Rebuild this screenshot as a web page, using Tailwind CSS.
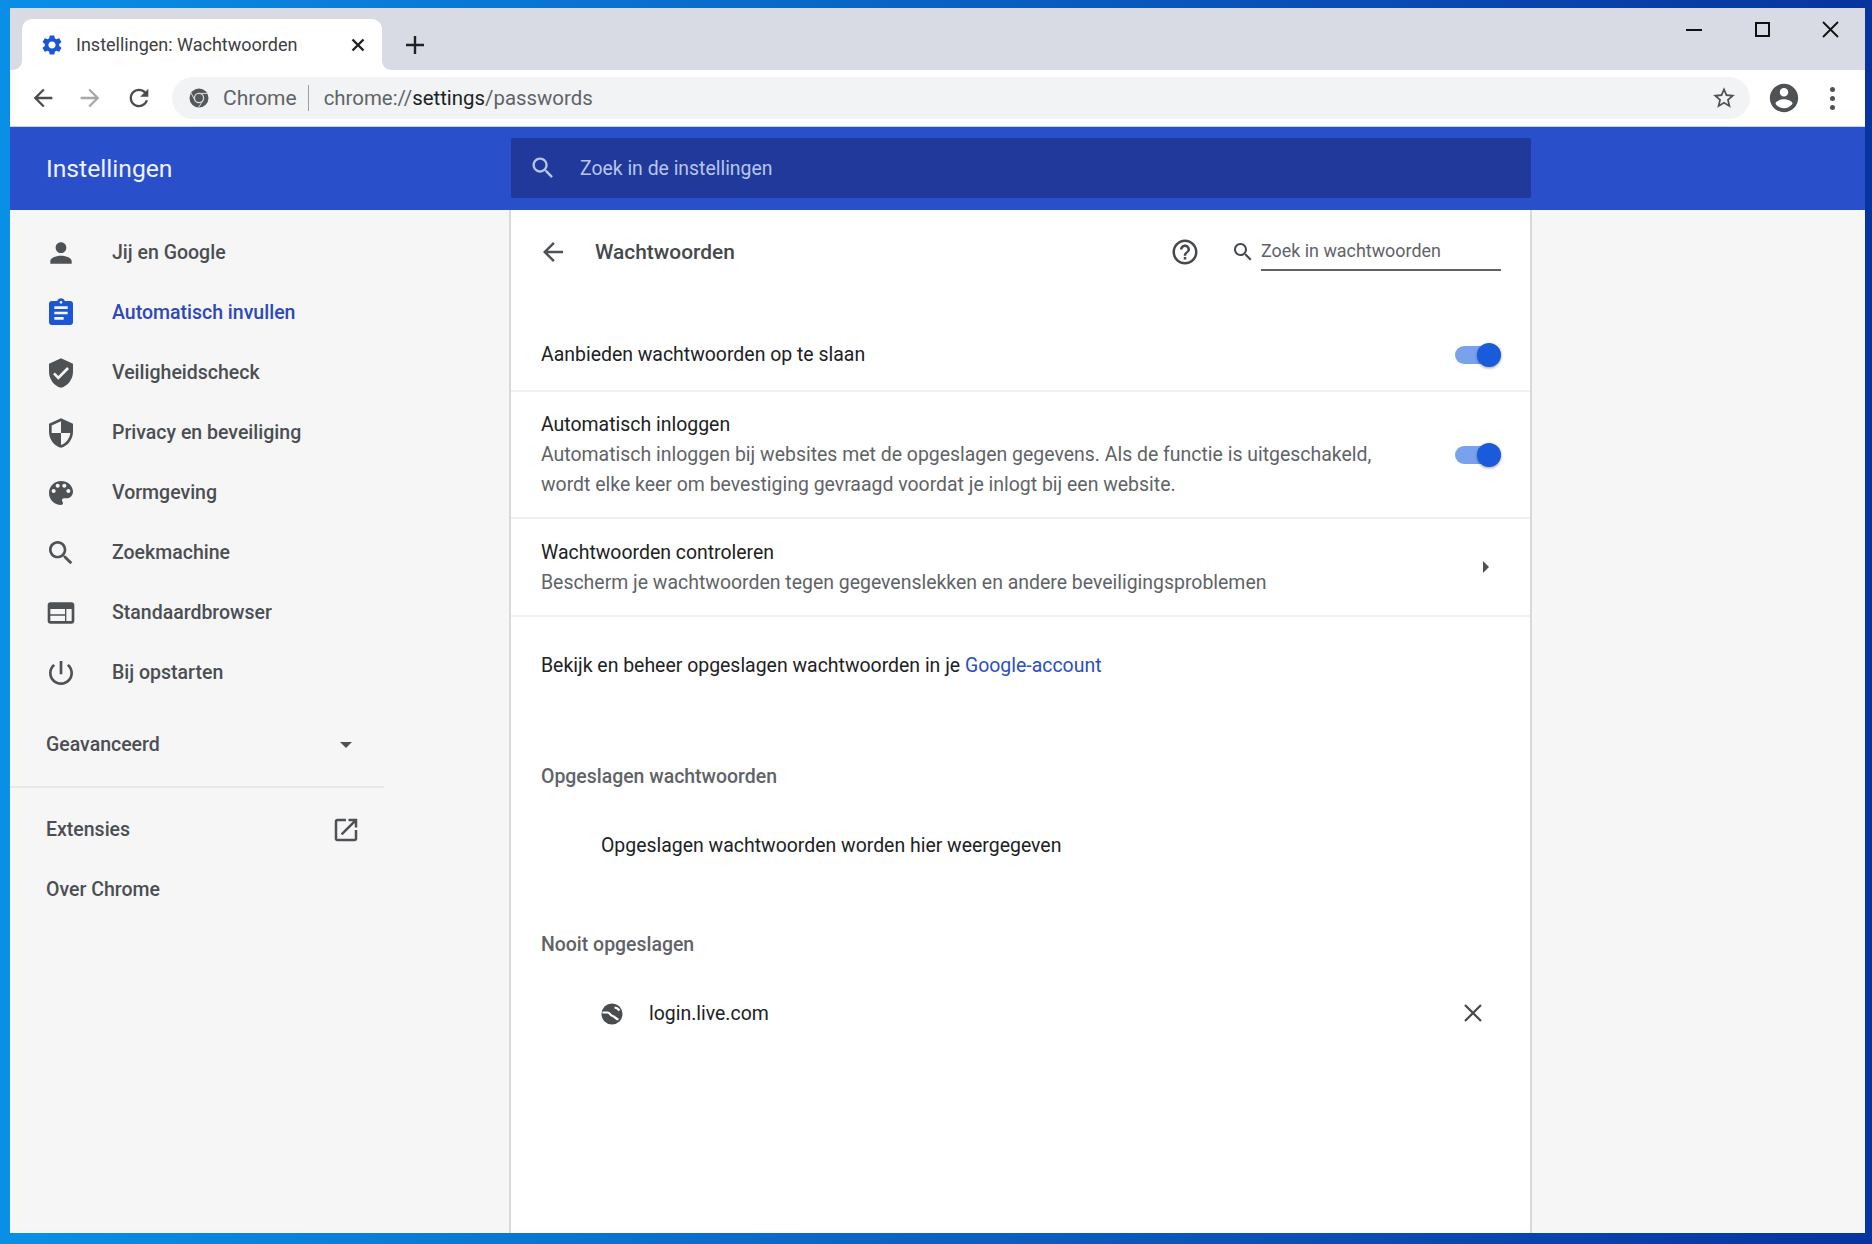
<!DOCTYPE html>
<html lang="nl">
<head>
<meta charset="utf-8">
<title>Instellingen: Wachtwoorden</title>
<script src="https://cdn.jsdelivr.net/npm/@tailwindcss/browser@4"></script>
</head>
<body class="m-0 overflow-hidden">
<div class="w-[1872px] h-[1244px] pt-[8px] pl-[10px] pr-[7px] pb-[11px] bg-[linear-gradient(90deg,#0a8fe6_0%,#0a74d0_30%,#0a4fb4_70%,#07349f_100%)] font-['Roboto',sans-serif]">
  <div class="w-full h-full flex flex-col bg-white overflow-hidden">

    <!-- tab strip -->
    <div class="h-[62px] shrink-0 bg-[#d8dbe3] flex items-end relative">
      <div class="relative ml-[12px] w-[360px] h-[51px] bg-white rounded-t-[10px] flex items-center pl-[18px] pr-[17px]">
        <svg class="absolute left-[-10px] bottom-0 w-[10px] h-[10px] fill-white" viewBox="0 0 10 10"><path d="M10 0v10H0C6 10 10 6 10 0z"/></svg>
        <svg class="absolute right-[-10px] bottom-0 w-[10px] h-[10px] fill-white" viewBox="0 0 10 10"><path d="M0 0v10h10C4 10 0 6 0 0z"/></svg>
        <svg class="w-[24px] h-[24px] shrink-0 fill-[#1a56d6]" viewBox="0 0 24 24"><path d="M19.14 12.94c.04-.3.06-.61.06-.94 0-.32-.02-.64-.07-.94l2.03-1.58c.18-.14.23-.41.12-.61l-1.92-3.32c-.12-.22-.37-.29-.59-.22l-2.39.96c-.5-.38-1.03-.7-1.62-.94l-.36-2.54c-.04-.24-.24-.41-.48-.41h-3.84c-.24 0-.43.17-.47.41l-.36 2.54c-.59.24-1.13.57-1.62.94l-2.39-.96c-.22-.08-.47 0-.59.22L2.74 8.87c-.12.21-.08.47.12.61l2.03 1.58c-.05.3-.09.63-.09.94s.02.64.07.94l-2.03 1.58c-.18.14-.23.41-.12.61l1.92 3.32c.12.22.37.29.59.22l2.39-.96c.5.38 1.03.7 1.62.94l.36 2.54c.05.24.24.41.48.41h3.84c.24 0 .44-.17.47-.41l.36-2.54c.59-.24 1.13-.56 1.62-.94l2.39.96c.22.08.47 0 .59-.22l1.92-3.32c.12-.22.07-.47-.12-.61l-2.01-1.58zM12 15.6c-1.98 0-3.6-1.62-3.6-3.6s1.62-3.6 3.6-3.6 3.6 1.62 3.6 3.6-1.62 3.6-3.6 3.6z"/></svg>
        <span class="ml-[12px] text-[18px] text-[#3c4043] whitespace-nowrap">Instellingen: Wachtwoorden</span>
        <svg class="ml-auto w-[14px] h-[14px] stroke-[#202124] fill-none" viewBox="0 0 14 14" stroke-width="2.4"><path d="M1.5 1.5l11 11M12.5 1.5l-11 11"/></svg>
      </div>
      <svg class="ml-[24px] mb-[16px] w-[18px] h-[18px] stroke-[#202124] fill-none" viewBox="0 0 18 18" stroke-width="2.4"><path d="M9 0v18M0 9h18"/></svg>
      <div class="ml-auto flex items-center self-start pt-[13px] pr-[26px]">
        <div class="w-[16px] h-[2px] bg-[#111]"></div>
        <div class="ml-[53px] w-[15px] h-[15px] border-2 border-[#111]"></div>
        <svg class="ml-[52px] w-[17px] h-[17px] stroke-[#111] fill-none" viewBox="0 0 17 17" stroke-width="1.8"><path d="M1 1l15 15M16 1L1 16"/></svg>
      </div>
    </div>

    <!-- toolbar -->
    <div class="h-[56px] shrink-0 bg-white flex items-center relative">
      <svg class="ml-[19px] w-[28px] h-[28px] fill-[#4a4d50]" viewBox="0 0 24 24"><path d="M20 11H7.83l5.59-5.59L12 4l-8 8 8 8 1.41-1.41L7.83 13H20v-2z"/></svg>
      <svg class="ml-[19px] w-[28px] h-[28px] fill-[#a6a8aa]" viewBox="0 0 24 24"><path d="M4 11h12.17l-5.59-5.59L12 4l8 8-8 8-1.41-1.41L16.17 13H4v-2z"/></svg>
      <svg class="ml-[21px] w-[28px] h-[28px] fill-[#4a4d50]" viewBox="0 0 24 24"><path d="M17.65 6.35C16.2 4.9 14.21 4 12 4c-4.42 0-7.99 3.58-7.99 8s3.57 8 7.99 8c3.73 0 6.84-2.55 7.73-6h-2.08c-.82 2.33-3.04 4-5.65 4-3.31 0-6-2.69-6-6s2.69-6 6-6c1.66 0 3.14.69 4.22 1.78L13 11h7V4l-2.35 2.35z"/></svg>
      <div class="ml-[19px] w-[1578px] h-[42px] rounded-full bg-[#f1f3f4] flex items-center pl-[17px]">
        <svg class="w-[20px] h-[20px] shrink-0" viewBox="0 0 20 20"><circle cx="10" cy="10" r="9.5" fill="#55585b"/><circle cx="10" cy="10" r="4.6" fill="none" stroke="#d8d9da" stroke-width="1.3"/><path d="M10 5.4h8.4M6 12.4L2 5M14 12.4L9.6 19.4" stroke="#d8d9da" stroke-width="1" fill="none"/></svg>
        <span class="ml-[14px] pt-[1px] text-[21px] text-[#5f6368]">Chrome</span>
        <div class="ml-[11px] w-px h-[26px] bg-[#9aa0a6]"></div>
        <span class="ml-[15px] text-[20.4px] text-[#5f6368] whitespace-nowrap">chrome://<span class="text-[#202124]">settings</span>/passwords</span>
        <svg class="ml-auto mr-[13px] w-[26px] h-[26px] fill-[#4f5255]" viewBox="0 0 24 24"><path d="M22 9.24l-7.19-.62L12 2 9.19 8.63 2 9.24l5.46 4.73L5.82 21 12 17.27 18.18 21l-1.63-7.03L22 9.24zM12 15.4l-3.76 2.27 1-4.28-3.32-2.88 4.38-.38L12 6.1l1.71 4.04 4.38.38-3.32 2.88 1 4.28L12 15.4z"/></svg>
      </div>
      <svg class="ml-[17px] w-[34px] h-[34px] fill-[#4f5255]" viewBox="0 0 24 24"><path d="M12 2C6.48 2 2 6.48 2 12s4.48 10 10 10 10-4.48 10-10S17.52 2 12 2zm0 3c1.66 0 3 1.34 3 3s-1.34 3-3 3-3-1.34-3-3 1.34-3 3-3zm0 14.2c-2.5 0-4.71-1.28-6-3.22.03-1.99 4-3.08 6-3.08 1.99 0 5.97 1.09 6 3.08-1.29 1.94-3.5 3.22-6 3.22z"/></svg>
      <div class="ml-[29px] flex flex-col gap-[4px]">
        <div class="w-[5px] h-[5px] rounded-full bg-[#4f5255]"></div>
        <div class="w-[5px] h-[5px] rounded-full bg-[#4f5255]"></div>
        <div class="w-[5px] h-[5px] rounded-full bg-[#4f5255]"></div>
      </div>
    </div>

    <!-- settings header -->
    <div class="h-[84px] shrink-0 bg-[#2a4fcb] flex items-center border-t border-[#c5d3ee]">
      <div class="w-[501px] shrink-0 pl-[36px] text-[24.7px] text-[#eef3fe]">Instellingen</div>
      <div class="w-[1020px] h-[60px] mb-[2px] bg-[#20399a] rounded-[2px] flex items-center pl-[18px]">
        <svg class="w-[28px] h-[28px] fill-[#b6c6f0]" viewBox="0 0 24 24"><path d="M15.5 14h-.79l-.28-.27C15.41 12.59 16 11.11 16 9.5 16 5.91 13.09 3 9.5 3S3 5.91 3 9.5 5.91 16 9.5 16c1.61 0 3.09-.59 4.23-1.57l.27.28v.79l5 4.99L20.49 19l-4.99-5zm-6 0C7.01 14 5 11.99 5 9.5S7.01 5 9.5 5 14 7.01 14 9.5 11.99 14 9.5 14z"/></svg>
        <span class="ml-[23px] pt-[2px] text-[19.4px] text-[#b6c6f0]">Zoek in de instellingen</span>
      </div>
    </div>

    <!-- body -->
    <div class="flex-1 flex min-h-0 bg-[#f6f6f7]">
      <!-- sidebar -->
      <nav class="w-[499px] shrink-0 pt-[13px] text-[19.5px] font-medium text-[#4b4e52]">
        <div class="h-[60px] flex items-center pl-[35px]"><svg class="w-[32px] h-[32px] fill-[#4f5255]" viewBox="0 0 24 24"><path d="M12 12c2.21 0 4-1.79 4-4s-1.79-4-4-4-4 1.79-4 4 1.79 4 4 4zm0 2c-2.67 0-8 1.34-8 4v2h16v-2c0-2.66-5.33-4-8-4z"/></svg><span class="ml-[35px]">Jij en Google</span></div>
        <div class="h-[60px] flex items-center pl-[35px] text-[#2d48b8]"><svg class="w-[32px] h-[32px] fill-[#1a56d6]" viewBox="0 0 24 24"><path d="M19 3h-4.18C14.4 1.84 13.3 1 12 1c-1.3 0-2.4.84-2.82 2H5c-1.1 0-2 .9-2 2v14c0 1.1.9 2 2 2h14c1.1 0 2-.9 2-2V5c0-1.1-.9-2-2-2zm-7 0c.55 0 1 .45 1 1s-.45 1-1 1-1-.45-1-1 .45-1 1-1zm2 14H7v-2h7v2zm3-4H7v-2h10v2zm0-4H7V7h10v2z"/></svg><span class="ml-[35px]">Automatisch invullen</span></div>
        <div class="h-[60px] flex items-center pl-[35px]"><svg class="w-[32px] h-[32px] fill-[#4f5255]" viewBox="0 0 24 24"><path d="M12 1L3 5v6c0 5.55 3.84 10.74 9 12 5.16-1.26 9-6.45 9-12V5l-9-4zm-2 16l-4-4 1.41-1.41L10 14.17l6.59-6.59L18 9l-8 8z"/></svg><span class="ml-[35px]">Veiligheidscheck</span></div>
        <div class="h-[60px] flex items-center pl-[35px]"><svg class="w-[32px] h-[32px] fill-[#4f5255]" viewBox="0 0 24 24"><path d="M12 1L3 5v6c0 5.55 3.84 10.74 9 12 5.16-1.26 9-6.45 9-12V5l-9-4zm0 10.99h7c-.53 4.12-3.28 7.79-7 8.94V12H5V6.3l7-3.11v8.8z"/></svg><span class="ml-[35px]">Privacy en beveiliging</span></div>
        <div class="h-[60px] flex items-center pl-[35px]"><svg class="w-[32px] h-[32px] fill-[#4f5255]" viewBox="0 0 24 24"><path d="M12 3c-4.97 0-9 4.03-9 9s4.03 9 9 9c.83 0 1.5-.67 1.5-1.5 0-.39-.15-.74-.39-1.01-.23-.26-.38-.61-.38-.99 0-.83.67-1.5 1.5-1.5H16c2.76 0 5-2.24 5-5 0-4.42-4.03-8-9-8zm-5.5 9c-.83 0-1.5-.67-1.5-1.5S5.67 9 6.5 9 8 9.67 8 10.5 7.33 12 6.5 12zm3-4C8.67 8 8 7.33 8 6.5S8.67 5 9.5 5s1.5.67 1.5 1.5S10.33 8 9.5 8zm5 0c-.83 0-1.5-.67-1.5-1.5S13.67 5 14.5 5s1.5.67 1.5 1.5S15.33 8 14.5 8zm3 4c-.83 0-1.5-.67-1.5-1.5S16.67 9 17.5 9s1.5.67 1.5 1.5-.67 1.5-1.5 1.5z"/></svg><span class="ml-[35px]">Vormgeving</span></div>
        <div class="h-[60px] flex items-center pl-[35px]"><svg class="w-[32px] h-[32px] fill-[#4f5255]" viewBox="0 0 24 24"><path d="M15.5 14h-.79l-.28-.27C15.41 12.59 16 11.11 16 9.5 16 5.91 13.09 3 9.5 3S3 5.91 3 9.5 5.91 16 9.5 16c1.61 0 3.09-.59 4.23-1.57l.27.28v.79l5 4.99L20.49 19l-4.99-5zm-6 0C7.01 14 5 11.99 5 9.5S7.01 5 9.5 5 14 7.01 14 9.5 11.99 14 9.5 14z"/></svg><span class="ml-[35px]">Zoekmachine</span></div>
        <div class="h-[60px] flex items-center pl-[35px]"><svg class="w-[32px] h-[32px] fill-[#4f5255]" viewBox="0 0 24 24"><path d="M20 4H4c-1.1 0-1.99.9-1.99 2L2 18c0 1.1.9 2 2 2h16c1.1 0 2-.9 2-2V6c0-1.1-.9-2-2-2zm-5 14H4v-4h11v4zm0-5H4V9h11v4zm5 5h-4V9h4v9z"/></svg><span class="ml-[35px]">Standaardbrowser</span></div>
        <div class="h-[60px] flex items-center pl-[35px]"><svg class="w-[32px] h-[32px] fill-[#4f5255]" viewBox="0 0 24 24"><path d="M13 3h-2v10h2V3zm4.83 2.17l-1.42 1.42C17.99 7.86 19 9.81 19 12c0 3.87-3.13 7-7 7s-7-3.13-7-7c0-2.19 1.01-4.14 2.58-5.42L6.17 5.17C4.23 6.82 3 9.26 3 12c0 4.97 4.03 9 9 9s9-4.03 9-9c0-2.74-1.23-5.18-3.17-6.83z"/></svg><span class="ml-[35px]">Bij opstarten</span></div>
        <div class="mt-[12px] w-[374px] h-[60px] flex items-center justify-between pl-[36px] pr-[32px]"><span>Geavanceerd</span><svg class="w-[12px] h-[6px] fill-[#4f5255]" viewBox="0 0 12 6"><path d="M0 0h12L6 6z"/></svg></div>
        <div class="mt-[11px] w-[374px] h-[2px] bg-[#e6e7e8]"></div>
        <div class="mt-[12px] w-[374px] h-[60px] flex items-center justify-between pl-[36px] pr-[23px]"><span>Extensies</span><svg class="w-[30px] h-[30px] fill-[#4f5255]" viewBox="0 0 24 24"><path d="M19 19H5V5h7V3H5c-1.11 0-2 .9-2 2v14c0 1.1.89 2 2 2h14c1.1 0 2-.9 2-2v-7h-2v7zM14 3v2h3.59l-9.83 9.83 1.41 1.41L19 6.41V10h2V3h-7z"/></svg></div>
        <div class="h-[60px] flex items-center pl-[36px]">Over Chrome</div>
      </nav>

      <!-- main card -->
      <main class="w-[1023px] shrink-0 bg-white border-x-2 border-[#d8d9db] text-[19.45px] text-[#202124]">
        <div class="h-[84px] flex items-center pl-[27px] pr-[29px]">
          <svg class="w-[30px] h-[30px] fill-[#4f5255]" viewBox="0 0 24 24"><path d="M20 11H7.83l5.59-5.59L12 4l-8 8 8 8 1.41-1.41L7.83 13H20v-2z"/></svg>
          <span class="ml-[27px] pt-[2px] text-[20.9px] font-medium text-[#45484c]">Wachtwoorden</span>
          <svg class="ml-auto w-[30px] h-[30px] fill-[#45484c]" viewBox="0 0 24 24"><path d="M11 18h2v-2h-2v2zm1-16C6.48 2 2 6.48 2 12s4.48 10 10 10 10-4.48 10-10S17.52 2 12 2zm0 18c-4.41 0-8-3.59-8-8s3.59-8 8-8 8 3.59 8 8-3.59 8-8 8zm0-14c-2.21 0-4 1.79-4 4h2c0-1.1.9-2 2-2s2 .9 2 2c0 2-3 1.75-3 5h2c0-2.25 3-2.5 3-5 0-2.21-1.79-4-4-4z"/></svg>
          <svg class="ml-[31px] w-[24px] h-[24px] fill-[#45484c]" viewBox="0 0 24 24"><path d="M15.5 14h-.79l-.28-.27C15.41 12.59 16 11.11 16 9.5 16 5.91 13.09 3 9.5 3S3 5.91 3 9.5 5.91 16 9.5 16c1.61 0 3.09-.59 4.23-1.57l.27.28v.79l5 4.99L20.49 19l-4.99-5zm-6 0C7.01 14 5 11.99 5 9.5S7.01 5 9.5 5 14 7.01 14 9.5 11.99 14 9.5 14z"/></svg>
          <div class="ml-[6px] w-[240px] h-[36px] mt-[2px] border-b-2 border-[#5f6368] text-[17.9px] text-[#5f6368] leading-[32px]">Zoek in wachtwoorden</div>
        </div>
        <div class="mt-[26px] h-[72px] flex items-center justify-between pl-[30px] pr-[29px] border-b-2 border-[#f0f0f0]">
          <span>Aanbieden wachtwoorden op te slaan</span>
          <div class="relative w-[46px] h-[24px] flex items-center"><div class="w-full h-[18px] rounded-full bg-[#78a3ec]"></div><div class="absolute right-0 top-0 w-[24px] h-[24px] rounded-full bg-[#1a5bdb] shadow-[0_1px_3px_rgba(0,0,0,0.4)]"></div></div>
        </div>
        <div class="h-[127px] flex items-center justify-between pl-[30px] pr-[29px] border-b-2 border-[#f0f0f0]">
          <div class="leading-[30px] pt-[1px]">
            <div>Automatisch inloggen</div>
            <div class="text-[#5f6368]">Automatisch inloggen bij websites met de opgeslagen gegevens. Als de functie is uitgeschakeld,<br>wordt elke keer om bevestiging gevraagd voordat je inlogt bij een website.</div>
          </div>
          <div class="relative w-[46px] h-[24px] flex items-center"><div class="w-full h-[18px] rounded-full bg-[#78a3ec]"></div><div class="absolute right-0 top-0 w-[24px] h-[24px] rounded-full bg-[#1a5bdb] shadow-[0_1px_3px_rgba(0,0,0,0.4)]"></div></div>
        </div>
        <div class="h-[98px] flex items-center justify-between pl-[30px] pr-[41px] border-b-2 border-[#f0f0f0]">
          <div class="leading-[30px] pt-[2px]">
            <div>Wachtwoorden controleren</div>
            <div class="text-[#5f6368]">Bescherm je wachtwoorden tegen gegevenslekken en andere beveiligingsproblemen</div>
          </div>
          <svg class="w-[6px] h-[12px] fill-[#4f5255]" viewBox="0 0 6 12"><path d="M0 0l6 6-6 6z"/></svg>
        </div>
        <div class="h-[96px] flex items-center pl-[30px] pt-[2px]"><span>Bekijk en beheer opgeslagen wachtwoorden in je <span class="text-[#2a4fc0]">Google-account</span></span></div>
        <div class="h-[60px] mt-[34px] flex items-center pl-[30px] font-medium text-[#5f6368]">Opgeslagen wachtwoorden</div>
        <div class="h-[78px] flex items-center pl-[90px]">Opgeslagen wachtwoorden worden hier weergegeven</div>
        <div class="h-[60px] mt-[30px] flex items-center pl-[30px] font-medium text-[#5f6368]">Nooit opgeslagen</div>
        <div class="h-[78px] flex items-center pl-[90px] pr-[48px]">
          <svg class="w-[22px] h-[22px]" viewBox="0 0 22 22"><circle cx="11" cy="11" r="10.5" fill="#4a4d50"/><path d="M1.5 9.5h5c2.5 0 2.5 3 5 3.5s3 3 6 3.500M13.500 4.500c2 0 3.500 1.200 5 3" fill="none" stroke="#fff" stroke-width="2.2"/></svg>
          <span class="ml-[26px]">login.live.com</span>
          <svg class="ml-auto mb-[2px] w-[18px] h-[18px] stroke-[#45484c] fill-none" viewBox="0 0 18 18" stroke-width="2.2"><path d="M1 1l16 16M17 1L1 17"/></svg>
        </div>
      </main>
    </div>
  </div>
</div>
</body>
</html>
